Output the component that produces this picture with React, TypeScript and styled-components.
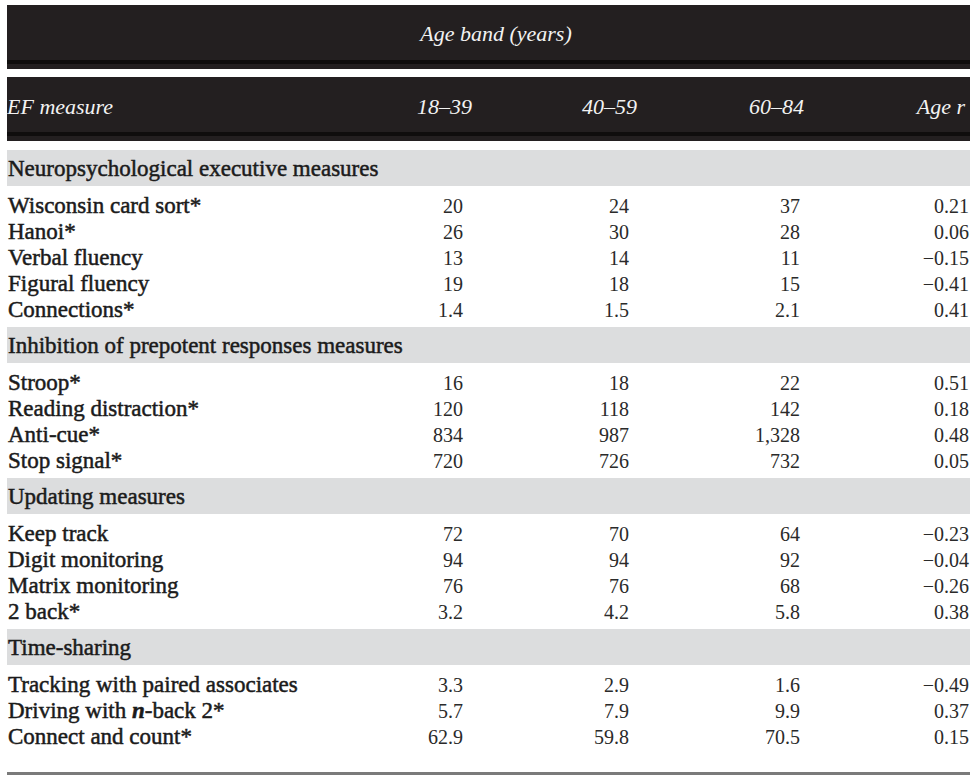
import React from "react";
import styled, { createGlobalStyle } from "styled-components";

const GlobalStyle = createGlobalStyle`
  html, body {
    margin: 0;
    padding: 0;
    background: #ffffff;
  }
  body {
    font-family: "Liberation Serif", "Times New Roman", serif;
    color: #1b1b1b;
  }
`;

type Row = { name: string; values: string[] };
type Section = { title: string; rows: Row[] };

const sections: Section[] = [
  {
    title: "Neuropsychological executive measures",
    rows: [
      { name: "Wisconsin card sort*", values: ["20", "24", "37", "0.21"] },
      { name: "Hanoi*", values: ["26", "30", "28", "0.06"] },
      { name: "Verbal fluency", values: ["13", "14", "11", "\u22120.15"] },
      { name: "Figural fluency", values: ["19", "18", "15", "\u22120.41"] },
      { name: "Connections*", values: ["1.4", "1.5", "2.1", "0.41"] },
    ],
  },
  {
    title: "Inhibition of prepotent responses measures",
    rows: [
      { name: "Stroop*", values: ["16", "18", "22", "0.51"] },
      { name: "Reading distraction*", values: ["120", "118", "142", "0.18"] },
      { name: "Anti-cue*", values: ["834", "987", "1,328", "0.48"] },
      { name: "Stop signal*", values: ["720", "726", "732", "0.05"] },
    ],
  },
  {
    title: "Updating measures",
    rows: [
      { name: "Keep track", values: ["72", "70", "64", "\u22120.23"] },
      { name: "Digit monitoring", values: ["94", "94", "92", "\u22120.04"] },
      { name: "Matrix monitoring", values: ["76", "76", "68", "\u22120.26"] },
      { name: "2 back*", values: ["3.2", "4.2", "5.8", "0.38"] },
    ],
  },
  {
    title: "Time-sharing",
    rows: [
      { name: "Tracking with paired associates", values: ["3.3", "2.9", "1.6", "\u22120.49"] },
      { name: "Driving with |n|-back 2*", values: ["5.7", "7.9", "9.9", "0.37"] },
      { name: "Connect and count*", values: ["62.9", "59.8", "70.5", "0.15"] },
    ],
  },
];

// "|x|" marks the italic variable inside a label
const renderName = (name: string) =>
  name.split("|").map((part, i) =>
    i % 2 === 1 ? <Em key={i}>{part}</Em> : <React.Fragment key={i}>{part}</React.Fragment>
  );

const App = () => {
  return (
    <>
      <GlobalStyle />
      <Page>
        <Table>
          <DarkBar>
            <BandTitle>Age band (years)</BandTitle>
          </DarkBar>
          <HeadRow>
            <HeadCell>EF measure</HeadCell>
            <HeadNum>18–39</HeadNum>
            <HeadNum>40–59</HeadNum>
            <HeadNum>60–84</HeadNum>
            <HeadNum>Age r</HeadNum>
          </HeadRow>
          <Body>
            {sections.map((s) => (
              <div key={s.title}>
                <SectionTitle>{s.title}</SectionTitle>
                <Rows>
                  {s.rows.map((r, i) => (
                    <DataRow key={i}>
                      <Label>{renderName(r.name)}</Label>
                      {r.values.map((v, j) => (
                        <Num key={j}>{v}</Num>
                      ))}
                    </DataRow>
                  ))}
                </Rows>
              </div>
            ))}
          </Body>
          <BottomRule />
        </Table>
      </Page>
    </>
  );
};

const Page = styled.div`
  padding: 5px 4px 0 7px;
  width: 963px;
`;
const Table = styled.div`
  width: 963px;
  display: flex;
  flex-direction: column;
`;
const DarkBar = styled.div`
  height: 64px;
  box-sizing: border-box;
  background-color: #231f20;
  box-shadow: inset 0 -5px 0 #231f20, inset 0 -9px 0 #0f0d0d;
  display: flex;
  align-items: center;
  justify-content: center;
  padding: 0 0 6px 15px;
  color: #f2f2f2;
  font-style: italic;
  font-size: 22px;
`;
const BandTitle = styled.span`
  display: block;
`;
const HeadRow = styled.div`
  margin-top: 8px;
  height: 64px;
  box-sizing: border-box;
  background-color: #231f20;
  box-shadow: inset 0 -5px 0 #231f20, inset 0 -9px 0 #0f0d0d;
  display: grid;
  grid-template-columns: 1fr 165px 165px 167px 161px;
  align-items: center;
  padding: 0 5px 4px 0;
  color: #f2f2f2;
  font-style: italic;
  font-size: 22px;
`;
const HeadCell = styled.div`
  white-space: nowrap;
`;
const HeadNum = styled.div`
  text-align: right;
  white-space: nowrap;
`;
const Body = styled.div`
  margin-top: 9px;
  display: flex;
  flex-direction: column;
`;
const SectionTitle = styled.div`
  height: 36px;
  box-sizing: border-box;
  background-color: #dcddde;
  padding: 1px 0 0 1px;
  line-height: 35px;
  font-size: 23px;
  -webkit-text-stroke: 0.5px #1b1b1b;
  white-space: nowrap;
`;
const Rows = styled.div`
  padding: 7px 0 4px 0;
`;
const DataRow = styled.div`
  height: 26px;
  display: grid;
  grid-template-columns: 336px 120px 166px 171px 169px;
  padding-right: 1px;
  align-items: center;
  line-height: 26px;
`;
const Label = styled.div`
  font-size: 23px;
  -webkit-text-stroke: 0.5px #1b1b1b;
  white-space: nowrap;
  padding-left: 1px;
`;
const Num = styled.div`
  text-align: right;
  font-size: 20px;
  color: #2a2a2a;
  white-space: nowrap;
`;
const Em = styled.span`
  font-style: italic;
  font-weight: bold;
`;
const BottomRule = styled.div`
  margin-top: 18px;
  height: 3px;
  background-color: #7a7a7a;
`;

export default App;
